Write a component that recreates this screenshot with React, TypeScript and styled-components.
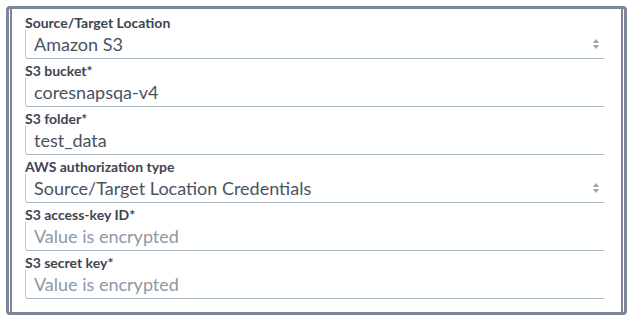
import styled, { createGlobalStyle } from 'styled-components';

const GlobalStyle = createGlobalStyle`
  html, body {
    margin: 0;
    padding: 0;
    background: #ffffff;
  }
  body {
    font-family: Lato, "Noto Sans", sans-serif;
  }
`;

interface FieldItem {
  label: string;
  value: string;
  placeholder?: boolean;
  select?: boolean;
}

const fields: FieldItem[] = [
  { label: 'Source/Target Location', value: 'Amazon S3', select: true },
  { label: 'S3 bucket*', value: 'coresnapsqa-v4' },
  { label: 'S3 folder*', value: 'test_data' },
  { label: 'AWS authorization type', value: 'Source/Target Location Credentials', select: true },
  { label: 'S3 access-key ID*', value: 'Value is encrypted', placeholder: true },
  { label: 'S3 secret key*', value: 'Value is encrypted', placeholder: true },
];

const Page = styled.div`
  width: 630px;
  height: 322px;
  padding: 6px 3px 7px 6px;
  box-sizing: border-box;
`;

const Frame = styled.div`
  height: 100%;
  border: 3px solid #7b8699;
  border-radius: 4px;
  padding: 0 1px;
  box-sizing: border-box;
`;

const Inner = styled.div`
  height: 100%;
  border-left: 2px solid #7b8699;
  border-right: 2px solid #7b8699;
  box-sizing: border-box;
  padding: 7px 17px 0 13px;
`;

const Field = styled.div`
  margin-bottom: 5px;
`;

const Label = styled.div`
  font-size: 14px;
  line-height: 14px;
  font-weight: 700;
  color: #3d4452;
`;

const Input = styled.div`
  position: relative;
  height: 29px;
  border-left: 1px solid #bfc8ce;
  border-bottom: 1px solid #a7bac2;
  border-bottom-left-radius: 3px;
  box-sizing: border-box;
  padding-left: 8px;
  display: flex;
  align-items: center;
`;

const Value = styled.span<{ $muted?: boolean }>`
  font-size: 18px;
  line-height: 20px;
  color: ${(p) => (p.$muted ? '#8c98a6' : '#4b5361')};
  white-space: nowrap;
`;

const Arrows = styled.div`
  position: absolute;
  right: 5px;
  top: 50%;
  transform: translateY(-50%);
  display: flex;
  flex-direction: column;
  gap: 2px;
`;

const Tri = styled.div<{ $down?: boolean }>`
  width: 0;
  height: 0;
  border-left: 3.5px solid transparent;
  border-right: 3.5px solid transparent;
  ${(p) =>
    p.$down
      ? 'border-top: 4px solid #93a5ae;'
      : 'border-bottom: 4px solid #93a5ae;'}
`;

export default function App() {
  return (
    <Page>
      <GlobalStyle />
      <Frame>
        <Inner>
          {fields.map((f) => (
            <Field key={f.label}>
              <Label>{f.label}</Label>
              <Input>
                <Value $muted={f.placeholder}>{f.value}</Value>
                {f.select && (
                  <Arrows>
                    <Tri />
                    <Tri $down />
                  </Arrows>
                )}
              </Input>
            </Field>
          ))}
        </Inner>
      </Frame>
    </Page>
  );
}
